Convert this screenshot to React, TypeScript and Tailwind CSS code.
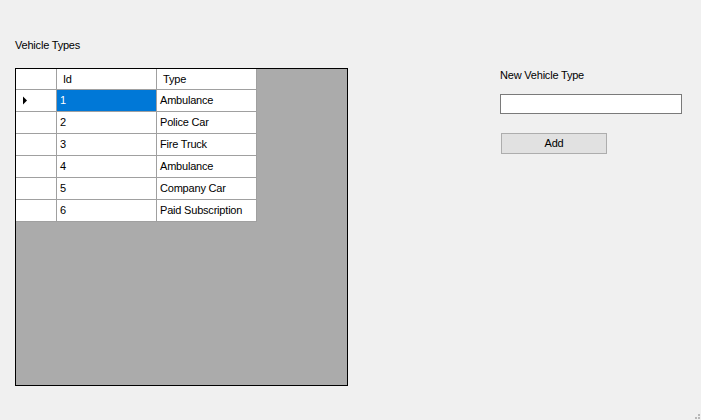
const rows = [
  { id: 1, type: "Ambulance" },
  { id: 2, type: "Police Car" },
  { id: 3, type: "Fire Truck" },
  { id: 4, type: "Ambulance" },
  { id: 5, type: "Company Car" },
  { id: 6, type: "Paid Subscription" },
];

function CurrentRowArrow() {
  return (
    <svg width="6" height="9" viewBox="0 0 6 9" className="ml-[6px]">
      <path d="M1 0.5 L5 4.5 L1 8.5 Z" fill="#000" />
    </svg>
  );
}

function VehicleGrid() {
  return (
    <div className="w-[333px] h-[318px] border border-black bg-[#ababab]">
      <div className="flex flex-col w-[241px]">
        {/* header */}
        <div className="flex h-[21px] bg-white border-b border-[#a0a0a0]">
          <div className="w-[41px] border-r border-[#a0a0a0]" />
          <div className="w-[100px] border-r border-[#a0a0a0] pl-[6px] flex items-center">Id</div>
          <div className="w-[100px] border-r border-[#a0a0a0] pl-[6px] flex items-center">Type</div>
        </div>

        {rows.map((row, index) => (
          <div key={row.id} className="flex h-[22px] bg-white border-b border-[#a0a0a0]">
            <div className="w-[41px] border-r border-[#a0a0a0] flex items-center">
              {index === 0 && <CurrentRowArrow />}
            </div>
            <div
              className={
                index === 0
                  ? "w-[100px] border-r border-[#a0a0a0] pl-[3px] flex items-center bg-[#0078d7] text-white"
                  : "w-[100px] border-r border-[#a0a0a0] pl-[3px] flex items-center"
              }
            >
              {row.id}
            </div>
            <div className="w-[100px] border-r border-[#a0a0a0] pl-[3px] flex items-center">
              {row.type}
            </div>
          </div>
        ))}
      </div>
    </div>
  );
}

export default function App() {
  return (
    <div className="relative w-[701px] h-[420px] bg-[#f0f0f0] text-black text-[11px] tracking-[-0.2px] font-['Liberation_Sans',Arial,sans-serif] flex">
      {/* Left side: grid */}
      <div className="pl-[15px] flex flex-col">
        <div className="mt-[39px] h-[12px] leading-[12px]">Vehicle Types</div>
        <div className="mt-[17px]">
          <VehicleGrid />
        </div>
      </div>

      {/* Right side: form */}
      <div className="ml-[152px] flex flex-col">
        <div className="mt-[69px] h-[12px] leading-[12px]">New Vehicle Type</div>
        <div className="mt-[13px] w-[182px] h-[20px] border border-[#7a7a7a] bg-white" />
        <button className="mt-[19px] ml-[1px] w-[106px] h-[21px] bg-[#e1e1e1] border border-[#adadad] flex items-center justify-center">
          Add
        </button>
      </div>

      {/* size grip */}
      <div className="absolute right-[1px] bottom-[4px] w-[2px] h-[2px] bg-[#b8b8b8]" />
      <div className="absolute right-[1px] bottom-[1px] w-[2px] h-[2px] bg-[#b8b8b8]" />
      <div className="absolute right-[4px] bottom-[1px] w-[2px] h-[2px] bg-[#b8b8b8]" />
    </div>
  );
}
